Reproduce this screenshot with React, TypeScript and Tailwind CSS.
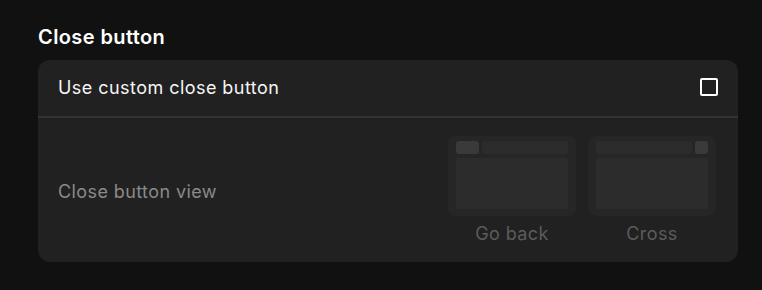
import React, { useState } from 'react';

const Preview = ({ variant }: { variant: 'back' | 'cross' }) => (
  <div className="w-[128px] h-[80px] rounded-lg bg-[#262626] px-2 pt-[5px] pb-[7px] flex flex-col gap-1">
    <div className="flex gap-[3px] h-[13px]">
      {variant === 'back' && <div className="w-[23px] rounded-[3px] bg-[#3a3a3a]" />}
      <div className="flex-1 rounded-[3px] bg-[#2c2c2c]" />
      {variant === 'cross' && <div className="w-[13px] rounded-[3px] bg-[#3a3a3a]" />}
    </div>
    <div className="flex-1 rounded-[3px] bg-[#2c2c2c]" />
  </div>
);

export default function App() {
  const [checked, setChecked] = useState(false);

  return (
    <div className="min-h-screen bg-[#111111] pl-[38px] pr-[24px] pt-[23px] font-['Inter',sans-serif]">
      <h2 className="text-[20px] leading-[28px] font-semibold tracking-[0.4px] text-white mb-[9px]">Close button</h2>

      <div className="rounded-xl bg-[#212121] overflow-hidden">
        {/* Toggle row */}
        <div className="flex items-center justify-between h-[58px] px-[20px] pb-[2px] border-b-2 border-[#333333]">
          <span className="text-[18px] font-normal tracking-[0.45px] text-[#f5f5f5]">Use custom close button</span>
          <button
            onClick={() => setChecked(!checked)}
            className="w-[18px] h-[18px] rounded-[2px] border-2 border-white"
          />
        </div>

        {/* View row */}
        <div className="flex items-center justify-between pl-[20px] pr-[22px] pt-[18px] pb-[16px]">
          <span className="text-[18px] tracking-[0.4px] text-[#8a8a8a]">Close button view</span>
          <div className="flex gap-3">
            <div className="flex flex-col items-center gap-[6px]">
              <Preview variant="back" />
              <span className="text-[18px] leading-6 tracking-[0.4px] text-[#5c5c5c]">Go back</span>
            </div>
            <div className="flex flex-col items-center gap-[6px]">
              <Preview variant="cross" />
              <span className="text-[18px] leading-6 tracking-[0.4px] text-[#5c5c5c]">Cross</span>
            </div>
          </div>
        </div>
      </div>
    </div>
  );
}
